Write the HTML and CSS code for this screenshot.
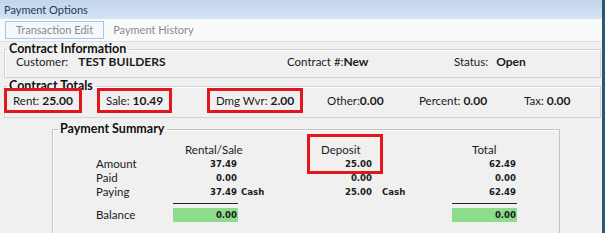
FILE: index.html
```html
<!DOCTYPE html>
<html lang="en">
<head>
  <meta charset="UTF-8">
  <meta name="viewport" content="width=device-width, initial-scale=1.0">
  <title>Payment Options</title>
  <link rel="stylesheet" href="styles.css">
</head>
<body>
  <div class="window">
    <!-- Title bar -->
    <div class="titlebar">Payment Options</div>

    <!-- Tabs -->
    <div class="toolbar">
      <span class="tab tab-active">Transaction Edit</span>
      <span class="tab">Payment History</span>
    </div>

    <!-- Contract Information -->
    <fieldset class="group group-info">
      <legend>Contract Information</legend>
      <div class="info-row">
        <div><span class="lbl lbl-customer">Customer:</span><b>TEST BUILDERS</b></div>
        <div><span class="lbl">Contract #:</span><b>New</b></div>
        <div><span class="lbl lbl-status">Status:</span><b>Open</b></div>
      </div>
    </fieldset>

    <!-- Contract Totals -->
    <fieldset class="group group-totals">
      <legend>Contract Totals</legend>
      <div class="totals-row">
        <div><span class="item mark">Rent: <b>25.00</b></span></div>
        <div><span class="item mark">Sale: <b>10.49</b></span></div>
        <div><span class="item mark">Dmg Wvr: <b>2.00</b></span></div>
        <div><span class="item">Other:<b>0.00</b></span></div>
        <div><span class="item">Percent: <b>0.00</b></span></div>
        <div><span class="item">Tax: <b>0.00</b></span></div>
      </div>
    </fieldset>

    <!-- Payment Summary -->
    <fieldset class="group group-summary">
      <legend>Payment Summary</legend>
      <div class="summary">
        <div class="hd hd-rental">Rental/Sale</div>
        <div class="hd hd-deposit">Deposit</div>
        <div class="hd hd-total">Total</div>

        <div class="row-label">Amount</div>
        <div class="num">37.49</div>
        <div></div>
        <div class="num">25.00</div>
        <div></div>
        <div class="num">62.49</div>

        <div class="row-label">Paid</div>
        <div class="num">0.00</div>
        <div></div>
        <div class="num">0.00</div>
        <div></div>
        <div class="num">0.00</div>

        <div class="row-label">Paying</div>
        <div class="num">37.49</div>
        <div class="pay">Cash</div>
        <div class="num">25.00</div>
        <div class="pay pay-deposit">Cash</div>
        <div class="num">62.49</div>

        <div></div>
        <div class="rule"></div>
        <div></div>
        <div></div>
        <div></div>
        <div class="rule"></div>

        <div class="row-label">Balance</div>
        <div class="num balance">0.00</div>
        <div></div>
        <div></div>
        <div></div>
        <div class="num balance">0.00</div>

        <div class="marker"></div>
      </div>
    </fieldset>
  </div>
</body>
</html>
```

FILE: styles.css
```css
body {
  margin: 0;
  background: #fff;
  font-family: Lato, "Open Sans", sans-serif;
  color: #1b1b1b;
}

.window {
  width: 602px;
  height: 233px;
  border-right: 3px solid #2d5672;
  background: #f0f0f0;
  overflow: hidden;
}

/* Title bar */
.titlebar {
  height: 19px;
  line-height: 19px;
  padding-left: 4px;
  font-size: 11px;
  color: #1e3a5c;
  background: linear-gradient(#c2d5eb, #d5e3f2);
}

/* Tabs */
.toolbar {
  height: 23px;
  box-sizing: border-box;
  display: flex;
  align-items: center;
  gap: 9px;
  padding-left: 5px;
  background: #f8fafc;
  border-bottom: 1px solid #dcdfe3;
}

.tab {
  font-size: 11px;
  line-height: 16px;
  color: #8b8b8b;
}

.tab-active {
  padding: 0 10px;
  border: 1px solid #a7c5e7;
  background: #f4f7fb;
}

/* Group boxes */
.group {
  margin: 0 1px 0 4px;
  padding: 0;
  border: 1px solid #d1d4d7;
  box-shadow: inset 1px 1px 0 #fff;
}

.group legend {
  margin-left: 2px;
  padding: 0 3px 0 2px;
  font-size: 12.5px;
  font-weight: bold;
  line-height: 14px;
  color: #111;
}

.info-row {
  display: grid;
  grid-template-columns: 271px 167px auto;
  margin-top: -1px;
  padding: 0 0 8px 11px;
  font-size: 11.5px;
  line-height: 14px;
}

.info-row b {
  font-size: 12px;
}

.lbl-customer {
  margin-right: 10px;
}

.lbl-status {
  margin-right: 8px;
}

.group-totals {
  margin-top: 1px;
}

.totals-row {
  display: grid;
  grid-template-columns: 93px 110px 111px 92px 105px auto;
  margin: -5px 0 0 -1px;
  padding-bottom: 4px;
  font-size: 11.5px;
}

.totals-row b {
  font-size: 12px;
}

.item {
  display: inline-block;
  padding: 0 6px;
  line-height: 19px;
  border: 3px solid transparent;
}

.item.mark {
  border-color: #e3161e;
  background: #f0f0f0;
}

/* Payment summary */
.group-summary {
  width: 508px;
  box-sizing: border-box;
  margin: 4px 0 0 52px;
  padding-bottom: 20px;
  border-color: #c4c4c4;
}

.group-summary legend {
  margin-left: 5px;
}

.summary {
  position: relative;
  display: grid;
  grid-template-columns: 77px 65px 69px 66px 79px 65px;
  grid-template-rows: repeat(4, 14px) 9px 14px;
  margin-left: 43px;
  padding-top: 7px;
  font-size: 11.5px;
  line-height: 14px;
}

.hd {
  white-space: nowrap;
}

.hd-rental {
  grid-column: 2 / span 2;
  padding-left: 12px;
}

.hd-deposit {
  grid-column: 4 / span 2;
  padding-left: 14px;
}

.hd-total {
  grid-column: 6;
  padding-left: 20px;
}

.num,
.pay {
  font-family: "DejaVu Sans Condensed", "DejaVu Sans", sans-serif;
  font-stretch: condensed;
  font-size: 9.5px;
  font-weight: bold;
}

.num {
  text-align: right;
  padding-right: 1px;
}

.pay {
  padding-left: 3px;
}

.pay-deposit {
  padding-left: 9px;
}

.rule {
  height: 5px;
  box-sizing: border-box;
  border-bottom: 1px solid #222;
}

.balance {
  background: #8cdc8c;
}

.marker {
  position: absolute;
  left: 211px;
  top: -2px;
  width: 76px;
  height: 40px;
  box-sizing: border-box;
  border: 3px solid #e3161e;
}
```
